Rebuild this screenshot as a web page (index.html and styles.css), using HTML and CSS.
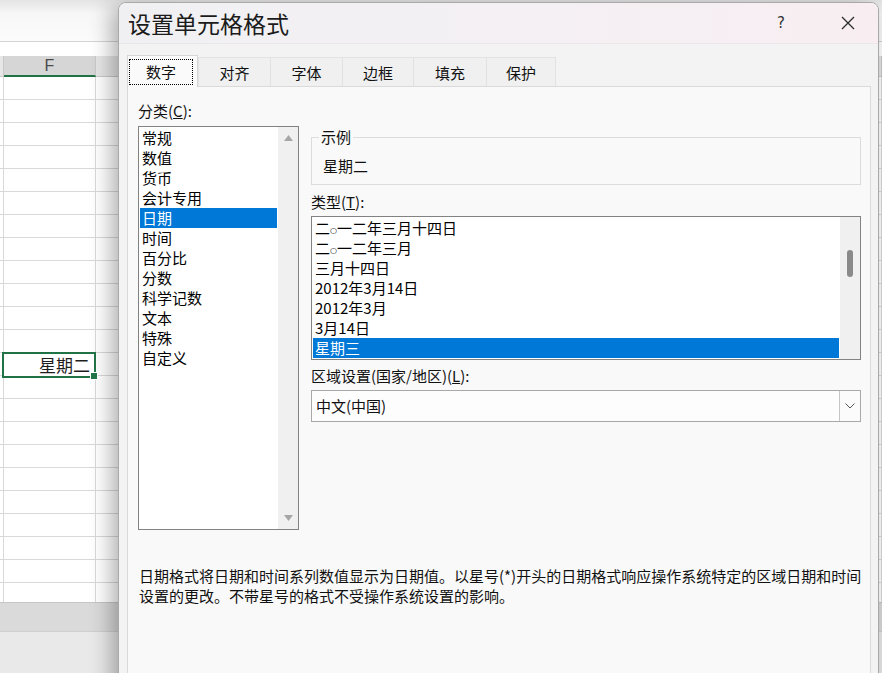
FILE: index.html
```html
<!DOCTYPE html>
<html lang="zh-CN">
<head>
<meta charset="utf-8">
<title>设置单元格格式</title>
<link rel="stylesheet" href="styles.css">
</head>
<body>
<div class="stage">
  <div class="sheet">
    <div class="formula"></div>
    <div class="gap"></div>
    <div class="colhead">
      <div class="ch e"></div><div class="ch f">F</div><div class="ch g"></div>
    </div>
    <div class="grid">
      <div class="row"><div class="c e"></div><div class="c f"></div><div class="c g"></div></div>
      <div class="row"><div class="c e"></div><div class="c f"></div><div class="c g"></div></div>
      <div class="row"><div class="c e"></div><div class="c f"></div><div class="c g"></div></div>
      <div class="row"><div class="c e"></div><div class="c f"></div><div class="c g"></div></div>
      <div class="row"><div class="c e"></div><div class="c f"></div><div class="c g"></div></div>
      <div class="row"><div class="c e"></div><div class="c f"></div><div class="c g"></div></div>
      <div class="row"><div class="c e"></div><div class="c f"></div><div class="c g"></div></div>
      <div class="row"><div class="c e"></div><div class="c f"></div><div class="c g"></div></div>
      <div class="row"><div class="c e"></div><div class="c f"></div><div class="c g"></div></div>
      <div class="row"><div class="c e"></div><div class="c f"></div><div class="c g"></div></div>
      <div class="row"><div class="c e"></div><div class="c f"></div><div class="c g"></div></div>
      <div class="row"><div class="c e"></div><div class="c f"></div><div class="c g"></div></div>
      <div class="row"><div class="c e"></div><div class="c f sel">星期二</div><div class="c g"></div></div>
      <div class="row"><div class="c e"></div><div class="c f"></div><div class="c g"></div></div>
      <div class="row"><div class="c e"></div><div class="c f"></div><div class="c g"></div></div>
      <div class="row"><div class="c e"></div><div class="c f"></div><div class="c g"></div></div>
      <div class="row"><div class="c e"></div><div class="c f"></div><div class="c g"></div></div>
      <div class="row"><div class="c e"></div><div class="c f"></div><div class="c g"></div></div>
      <div class="row"><div class="c e"></div><div class="c f"></div><div class="c g"></div></div>
      <div class="row"><div class="c e"></div><div class="c f"></div><div class="c g"></div></div>
      <div class="row"><div class="c e"></div><div class="c f"></div><div class="c g"></div></div>
      <div class="row"><div class="c e"></div><div class="c f"></div><div class="c g"></div></div>
      <div class="row"><div class="c e"></div><div class="c f"></div><div class="c g"></div></div>
    </div>
    <div class="tabsbar"></div>
    <div class="status"></div>
  </div>

  <div class="dialog">
    <div class="titlebar">
      <span class="title">设置单元格格式</span>
      <span class="help">?</span>
      <span class="close"><svg width="14" height="14" viewBox="0 0 14 14"><path d="M1 1 L13 13 M13 1 L1 13" stroke="#2b2b2b" stroke-width="1.3" fill="none"/></svg></span>
    </div>
    <div class="dbody">
      <div class="tabs">
        <div class="tab active"><span class="focus">数字</span></div>
        <div class="tab w72">对齐</div>
        <div class="tab w72">字体</div>
        <div class="tab w71">边框</div>
        <div class="tab w73">填充</div>
        <div class="tab w70 last">保护</div>
      </div>
      <div class="panel">
        <div class="cols">
          <div class="left">
            <div class="label">分类(<u>C</u>):</div>
            <div class="listbox cat">
              <div class="items">
                <div class="item">常规</div>
                <div class="item">数值</div>
                <div class="item">货币</div>
                <div class="item">会计专用</div>
                <div class="item selected">日期</div>
                <div class="item">时间</div>
                <div class="item">百分比</div>
                <div class="item">分数</div>
                <div class="item">科学记数</div>
                <div class="item">文本</div>
                <div class="item">特殊</div>
                <div class="item">自定义</div>
              </div>
              <div class="vscroll arrows">
                <svg width="9" height="6" viewBox="0 0 9 6"><polygon points="0,6 4.5,0 9,6" fill="#a6a6a6"/></svg>
                <svg width="9" height="6" viewBox="0 0 9 6"><polygon points="0,0 4.5,6 9,0" fill="#a6a6a6"/></svg>
              </div>
            </div>
          </div>
          <div class="right">
            <fieldset class="sample">
              <legend>示例</legend>
              <div class="sample-text">星期二</div>
            </fieldset>
            <div class="label type-label">类型(<u>T</u>):</div>
            <div class="listbox types">
              <div class="items">
                <div class="item">二<span class="ling">○</span>一二年三月十四日</div>
                <div class="item">二<span class="ling">○</span>一二年三月</div>
                <div class="item">三月十四日</div>
                <div class="item">2012年3月14日</div>
                <div class="item">2012年3月</div>
                <div class="item">3月14日</div>
                <div class="item selected">星期三</div>
              </div>
              <div class="vscroll"><div class="thumb"></div></div>
            </div>
            <div class="label locale-label">区域设置(国家/地区)(<u>L</u>):</div>
            <div class="combo">
              <span class="combo-text">中文(中国)</span>
              <span class="combo-btn"><svg width="10" height="6" viewBox="0 0 10 6"><polyline points="0.5,0.5 5,5 9.5,0.5" stroke="#555" stroke-width="1" fill="none"/></svg></span>
            </div>
          </div>
        </div>
        <p class="desc">日期格式将日期和时间系列数值显示为日期值。以星号(*)开头的日期格式响应操作系统特定的区域日期和时间<br>设置的更改。不带星号的格式不受操作系统设置的影响。</p>
      </div>
    </div>
  </div>
</div>
</body>
</html>
```

FILE: styles.css
```css
* { box-sizing: border-box; }

html, body {
  margin: 0;
  padding: 0;
}

body {
  width: 882px;
  height: 673px;
  overflow: hidden;
  font-family: "Noto Sans CJK SC", "Noto Sans", sans-serif;
  font-size: 15px;
  color: #000;
  background: #fff;
}

.stage {
  position: relative;
  width: 882px;
  height: 673px;
  overflow: hidden;
  background: #f0f0f0;
}

/* ---------- spreadsheet behind ---------- */
.sheet {
  width: 882px;
  display: flex;
  flex-direction: column;
  background: #fff;
}

.formula {
  height: 42px;
  border-bottom: 1px solid #d4d4d4;
  background: linear-gradient(180deg, #e4e4e4 0px, #f7f7f7 14px, #fbfbfb 100%);
}

.gap {
  height: 14px;
  background: #fff;
}

.colhead {
  height: 21px;
  display: flex;
}

.ch {
  height: 21px;
  background: #e6e6e6;
  border-right: 1px solid #c9c9c9;
  border-bottom: 1px solid #c9c9c9;
}

.ch.e, .c.e { width: 4px; }
.ch.f, .c.f { width: 92px; }
.ch.g, .c.g { flex: 1; }

.ch.f {
  background: #d6d6d6;
  border-bottom: 2px solid #217346;
  font-family: "Liberation Sans", sans-serif;
  font-size: 16px;
  line-height: 19px;
  color: #4a4a4a;
  text-align: center;
}

.grid {
  height: 525px;
  overflow: hidden;
}

.row {
  height: 23px;
  display: flex;
}

.c {
  height: 23px;
  border-right: 1px solid #d9d9d9;
  border-bottom: 1px solid #d9d9d9;
}

.c.sel {
  position: relative;
  margin-top: -1px;
  height: 26px;
  margin-left: -2px;
  width: 94px;
  border: 2px solid #217346;
  font-size: 17px;
  line-height: 22px;
  text-align: right;
  padding-right: 4px;
  color: #1e1e1e;
  background: #fff;
  z-index: 1;
}

.c.sel::after {
  content: "";
  position: absolute;
  right: -4px;
  bottom: -4px;
  width: 6px;
  height: 6px;
  background: #217346;
  border: 1px solid #fff;
}

.tabsbar {
  height: 29px;
  background: #dadada;
  border-top: 1px solid #c6c6c6;
}

.status {
  height: 42px;
  background: #e9e9e9;
  border-top: 1px solid #cfcfcf;
}

/* ---------- dialog ---------- */
.dialog {
  position: absolute;
  left: 118px;
  top: 2px;
  width: 761px;
  height: 700px;
  border: 1px solid #a9a9a9;
  border-radius: 8px 8px 0 0;
  overflow: hidden;
  background: #f3f3f3;
  box-shadow: -6px 4px 22px rgba(0, 0, 0, 0.32);
}

.titlebar {
  height: 41px;
  display: flex;
  align-items: center;
  padding-left: 9px;
  padding-right: 7px;
  background: linear-gradient(90deg, #f0f0f2 0%, #f4f0f3 50%, #f8eef2 100%);
  border-bottom: 1px solid #ebe6ea;
}

.title {
  font-size: 23px;
  line-height: 30px;
  color: #1b1b1b;
}

.help {
  margin-left: auto;
  width: 46px;
  text-align: center;
  font-family: "DejaVu Sans", sans-serif;
  font-size: 15px;
  color: #333;
}

.close {
  margin-left: 21px;
  width: 46px;
  height: 30px;
  display: flex;
  align-items: center;
  justify-content: center;
}

.dbody {
  padding-top: 10px;
}

.tabs {
  display: flex;
  align-items: flex-end;
  padding-left: 8px;
  height: 32px;
}

.tab {
  height: 29px;
  width: 71px;
  display: flex;
  align-items: center;
  justify-content: center;
  background: #f0f0f0;
  border-top: 1px solid #e2e2e2;
  border-left: 1px solid #e2e2e2;
  font-size: 15px;
  color: #111;
}

.tab.w70 { width: 70px; }
.tab.w71 { width: 71px; }
.tab.w72 { width: 72px; }
.tab.w73 { width: 73px; }
.tab.last { border-right: 1px solid #e2e2e2; }

.tab.active {
  position: relative;
  z-index: 1;
  height: 32px;
  margin-bottom: -1px;
  background: #fafafa;
  border: 1px solid #d6d6d6;
  border-bottom: none;
}

.focus {
  display: flex;
  align-items: center;
  justify-content: center;
  width: 64px;
  height: 26px;
  border: 1px dotted #000;
  margin-left: -3px;
}

.panel {
  margin-left: 8px;
  width: 744px;
  height: 620px;
  border: 1px solid #dadada;
  background: #f9f9f9;
  padding: 14px 0 0 10px;
}

.cols {
  display: flex;
}

.left {
  width: 161px;
}

.right {
  width: 550px;
  margin-left: 12px;
}

.label {
  height: 20px;
  line-height: 20px;
  font-size: 15px;
  color: #111;
}

.listbox {
  display: flex;
  background: #fff;
  border: 1px solid #828282;
}

.listbox.cat {
  margin-top: 5px;
  height: 404px;
}

.items {
  flex: 1;
  padding: 1px;
}

.item {
  height: 20px;
  line-height: 20px;
  padding-left: 2px;
  white-space: nowrap;
  color: #000;
}

.item.selected {
  background: #0078d7;
  color: #fff;
}

.ling {
  font-family: "DejaVu Sans", sans-serif;
  font-size: 8px;
  display: inline-block;
  width: 7px;
  text-align: center;
  vertical-align: 1px;
}

.vscroll {
  width: 20px;
  background: #f0f0f0;
}

.vscroll.arrows {
  display: flex;
  flex-direction: column;
  justify-content: space-between;
  align-items: center;
  padding: 8px 0;
}

.vscroll svg { display: block; }

.sample {
  margin: 26px 0 0 0;
  padding: 0 10px 7px 11px;
  border: 1px solid #dcdcdc;
  min-width: 0;
  height: 58px;
}

.sample legend {
  padding: 0 2px;
  margin-left: -4px;
  line-height: 20px;
  font-size: 15px;
  color: #111;
}

.sample-text {
  margin-top: 9px;
  line-height: 20px;
  color: #111;
}

.type-label {
  margin-top: 7px;
}

.listbox.types {
  margin-top: 4px;
  height: 144px;
}

.thumb {
  width: 6px;
  height: 27px;
  margin-top: 33px;
  margin-left: 7px;
  background: #8a8a8a;
  border-radius: 3px;
}

.locale-label {
  margin-top: 6px;
}

.combo {
  margin-top: 4px;
  height: 32px;
  display: flex;
  background: #fdfdfd;
  border: 1px solid #a8a8a8;
}

.combo-text {
  flex: 1;
  padding-left: 4px;
  line-height: 30px;
  color: #111;
}

.combo-btn {
  width: 21px;
  border-left: 1px solid #c6c6c6;
  display: flex;
  align-items: center;
  justify-content: center;
  background: #fbfbfb;
}

.desc {
  margin: 36px 0 0 1px;
  line-height: 20px;
  font-size: 15px;
  color: #111;
  white-space: nowrap;
}
```
